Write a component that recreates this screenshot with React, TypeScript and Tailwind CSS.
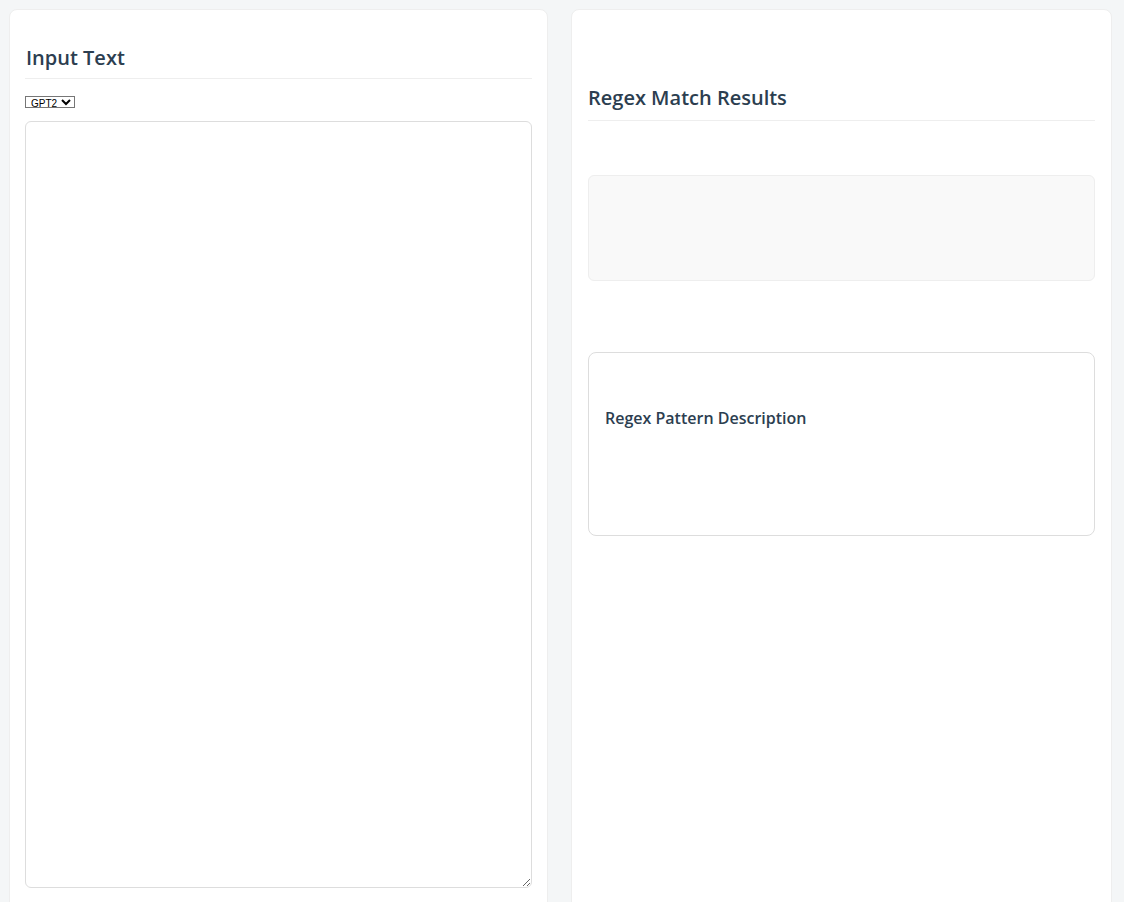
export default function App() {
  return (
    <div className="min-h-screen bg-[#f4f6f7] p-[9px] font-['Open_Sans',sans-serif]">
      <div className="flex gap-[23px]">
        {/* input */}
        <div className="flex h-[905px] w-[539px] flex-col rounded-lg border border-[#eeeeee] bg-white px-[15px] pt-4">
          <h2 className="mt-[19px] border-b border-[#eeeeee] pb-[7px] pl-px text-[20px] font-semibold leading-[26px] text-[#2c3e50]">
            Input Text
          </h2>
          <div className="mt-[17px] flex">
            <select className="block h-[12px] border border-[#767676] bg-white py-0 pl-px pr-0 text-[10px] leading-[10px] font-['Liberation_Sans',sans-serif] text-black">
              <option>GPT2</option>
            </select>
          </div>
          <textarea className="mt-[13px] h-[767px] w-full resize-y rounded-md border border-[#dddddd] bg-white p-2" />
        </div>

        {/* results */}
        <div className="flex h-[905px] w-[541px] flex-col rounded-lg border border-[#eeeeee] bg-white px-4 pt-4">
          <h2 className="mt-[59px] border-b border-[#eeeeee] pb-[9px] text-[20px] font-semibold leading-[26px] text-[#2c3e50]">
            Regex Match Results
          </h2>
          <div className="mt-[54px] h-[106px] rounded-md border border-[#eeeeee] bg-[#f9f9f9]" />
          <div className="mt-[71px] h-[184px] rounded-lg border border-[#dddddd] bg-white px-4">
            <h3 className="mt-[55px] text-[16px] font-semibold leading-[20px] text-[#2c3e50]">
              Regex Pattern Description
            </h3>
          </div>
        </div>
      </div>
    </div>
  );
}
